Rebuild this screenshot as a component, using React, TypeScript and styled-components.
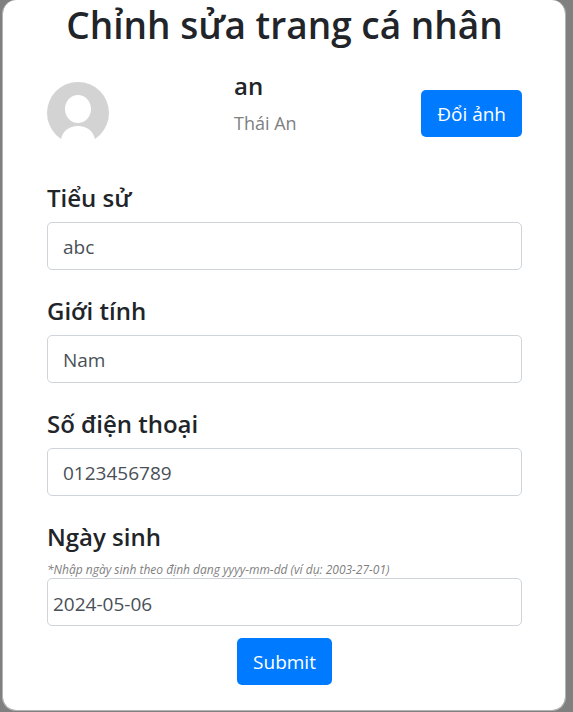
import React from 'react';
import styled, { createGlobalStyle } from 'styled-components';

const GlobalStyle = createGlobalStyle`
  *, *::before, *::after { box-sizing: border-box; }
  body {
    margin: 0;
    background: #808080;
    color: #212529;
    font-family: "Segoe UI", "Open Sans", "Noto Sans", sans-serif;
    font-size: 19px;
    line-height: 29px;
  }
`;

const Dialog = styled.main`
  margin: 0 7px 0 2px;
  padding: 0 43px 25px 44px;
  background: #fff;
  background-clip: padding-box;
  border: 1px solid #b4b4b4;
  border-top: 0;
  border-radius: 14px;
`;

const Title = styled.h1`
  margin: 0 0 21px;
  font-size: 37px;
  line-height: 50px;
  font-weight: 600;
  text-align: center;
  white-space: nowrap;
`;

const Profile = styled.section`
  display: grid;
  grid-template-columns: 187px 1fr auto;
  align-items: center;
  height: 84px;
  margin-bottom: 26px;
`;

const Avatar = styled.svg`
  width: 62px;
  height: 62px;
`;

const Names = styled.div`
  align-self: start;
`;

const Username = styled.h2`
  margin: 0 0 8px;
  font-size: 24px;
  line-height: 30px;
  font-weight: 600;
`;

const FullName = styled.p`
  margin: 0;
  color: #808080;
  font-size: 18px;
`;

const Button = styled.button`
  height: 47px;
  padding: 2px 16px 0;
  border: 0;
  border-radius: 5px;
  background: #007bff;
  color: #fff;
  font: inherit;
  cursor: pointer;
`;

const Field = styled.div`
  margin-bottom: 24px;
`;

const Label = styled.label`
  display: block;
  margin-bottom: 7px;
  font-size: 24px;
  line-height: 34px;
  font-weight: 600;
`;

const Hint = styled.small`
  display: block;
  color: #808080;
  font-size: 12px;
  line-height: 17px;
  font-style: italic;
`;

const Input = styled.input<{ $tight?: boolean }>`
  display: block;
  width: 100%;
  height: 48px;
  padding: ${(p) => (p.$tight ? '4px 5px 0' : '1px 15px 0')};
  border: 1px solid #ced4da;
  border-radius: 5px;
  background: #fff;
  color: #495057;
  font: inherit;
`;

const Actions = styled.div`
  display: flex;
  justify-content: center;
  margin-top: 12px;
`;

const fields = [
  { id: 'bio', label: 'Tiểu sử', value: 'abc' },
  { id: 'gender', label: 'Giới tính', value: 'Nam' },
  { id: 'phone', label: 'Số điện thoại', value: '0123456789' },
];

export default function App() {
  return (
    <>
      <GlobalStyle />
      <Dialog>
        <Title>Chỉnh sửa trang cá nhân</Title>
        <Profile>
          <Avatar viewBox="0 0 62 62" role="img" aria-label="an">
            <defs><clipPath id="disc"><circle cx="31" cy="31" r="31" /></clipPath></defs>
            <g clipPath="url(#disc)">
              <path
                fill="#d3d3d3"
                d="M0 0H62V57H48C46 49 40 44 31 44S16 49 14 57H0ZM31 13C24 13 18 19 18 27S24 41 31 41S44 35 44 27S38 13 31 13Z"
              />
            </g>
          </Avatar>
          <Names>
            <Username>an</Username>
            <FullName>Thái An</FullName>
          </Names>
          <Button type="button">Đổi ảnh</Button>
        </Profile>
        <form onSubmit={(e) => e.preventDefault()}>
          {fields.map((f) => (
            <Field key={f.id}>
              <Label htmlFor={f.id}>{f.label}</Label>
              <Input id={f.id} defaultValue={f.value} />
            </Field>
          ))}
          <Label htmlFor="birthday">Ngày sinh</Label>
          <Hint>*Nhập ngày sinh theo định dạng yyyy-mm-dd (ví dụ: 2003-27-01)</Hint>
          <Input id="birthday" $tight defaultValue="2024-05-06" />
          <Actions><Button type="submit">Submit</Button></Actions>
        </form>
      </Dialog>
    </>
  );
}
